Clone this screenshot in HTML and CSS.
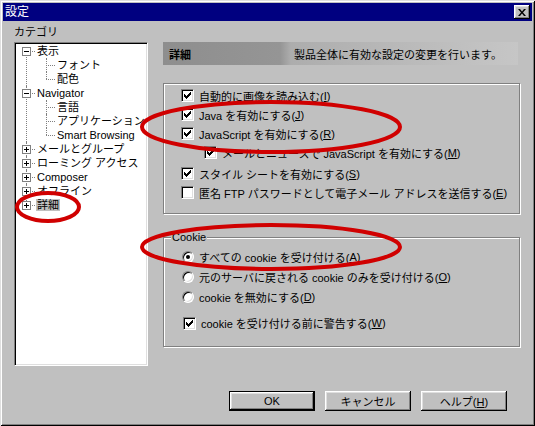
FILE: index.html
```html
<!DOCTYPE html>
<html lang="ja">
<head>
    <meta charset="UTF-8">
    <title>設定</title>
    <link rel="stylesheet" href="styles.css">
</head>
<body>

<div class="window">

    <div class="titlebar">
        <span class="title">設定</span>
        <span class="close">
            <svg width="8" height="7" viewBox="0 0 8 7"><path d="M0 0h2l2 2.4 2-2.4h2l-3 3.5 3 3.5h-2l-2-2.4-2 2.4h-2l3-3.5z"/></svg>
        </span>
    </div>

    <div class="content">

        <div class="left">
            <div class="cat-label">カテゴリ</div>
            <div class="tree">
                <ul class="tree-root">
                    <li>
                        <div class="row">
                            <svg class="exp" width="9" height="9" viewBox="0 0 9 9"><rect x=".5" y=".5" width="8" height="8" fill="#fff" stroke="#808080"/><path d="M2 4h5v1H2z"/></svg>
                            <span class="label">表示</span>
                        </div>
                        <ul>
                            <li><div class="row"><span class="label">フォント</span></div></li>
                            <li><div class="row"><span class="label">配色</span></div></li>
                        </ul>
                    </li>
                    <li>
                        <div class="row">
                            <svg class="exp" width="9" height="9" viewBox="0 0 9 9"><rect x=".5" y=".5" width="8" height="8" fill="#fff" stroke="#808080"/><path d="M2 4h5v1H2z"/></svg>
                            <span class="label">Navigator</span>
                        </div>
                        <ul>
                            <li><div class="row"><span class="label">言語</span></div></li>
                            <li><div class="row"><span class="label">アプリケーション</span></div></li>
                            <li><div class="row"><span class="label">Smart Browsing</span></div></li>
                        </ul>
                    </li>
                    <li>
                        <div class="row">
                            <svg class="exp" width="9" height="9" viewBox="0 0 9 9"><rect x=".5" y=".5" width="8" height="8" fill="#fff" stroke="#808080"/><path d="M2 4h5v1H2zM4 2h1v5H4z"/></svg>
                            <span class="label">メールとグループ</span>
                        </div>
                    </li>
                    <li>
                        <div class="row">
                            <svg class="exp" width="9" height="9" viewBox="0 0 9 9"><rect x=".5" y=".5" width="8" height="8" fill="#fff" stroke="#808080"/><path d="M2 4h5v1H2zM4 2h1v5H4z"/></svg>
                            <span class="label">ローミング アクセス</span>
                        </div>
                    </li>
                    <li>
                        <div class="row">
                            <svg class="exp" width="9" height="9" viewBox="0 0 9 9"><rect x=".5" y=".5" width="8" height="8" fill="#fff" stroke="#808080"/><path d="M2 4h5v1H2zM4 2h1v5H4z"/></svg>
                            <span class="label">Composer</span>
                        </div>
                    </li>
                    <li>
                        <div class="row">
                            <svg class="exp" width="9" height="9" viewBox="0 0 9 9"><rect x=".5" y=".5" width="8" height="8" fill="#fff" stroke="#808080"/><path d="M2 4h5v1H2zM4 2h1v5H4z"/></svg>
                            <span class="label">オフライン</span>
                        </div>
                    </li>
                    <li>
                        <div class="row">
                            <svg class="exp" width="9" height="9" viewBox="0 0 9 9"><rect x=".5" y=".5" width="8" height="8" fill="#fff" stroke="#808080"/><path d="M2 4h5v1H2zM4 2h1v5H4z"/></svg>
                            <span class="label sel">詳細</span>
                        </div>
                    </li>
                </ul>
            </div>
        </div>

        <div class="right">
            <div class="header">
                <b class="header-title">詳細</b>
                <span>製品全体に有効な設定の変更を行います。</span>
            </div>

            <div class="group group-general">
                <div class="opt"><span class="check"><svg width="7" height="7" viewBox="0 0 7 7"><path d="M0 2h1v1h1v1h1v-1h1v-1h1v-1h1v-1h1v3h-1v1h-1v1h-1v1h-1v1h-1v-1h-1v-1h-1z"/></svg></span>自動的に画像を読み込む(<u>I</u>)</div>
                <div class="opt"><span class="check"><svg width="7" height="7" viewBox="0 0 7 7"><path d="M0 2h1v1h1v1h1v-1h1v-1h1v-1h1v-1h1v3h-1v1h-1v1h-1v1h-1v1h-1v-1h-1v-1h-1z"/></svg></span>Java を有効にする(<u>J</u>)</div>
                <div class="opt"><span class="check"><svg width="7" height="7" viewBox="0 0 7 7"><path d="M0 2h1v1h1v1h1v-1h1v-1h1v-1h1v-1h1v3h-1v1h-1v1h-1v1h-1v1h-1v-1h-1v-1h-1z"/></svg></span>JavaScript を有効にする(<u>R</u>)</div>
                <div class="opt sub"><span class="check"><svg width="7" height="7" viewBox="0 0 7 7"><path d="M0 2h1v1h1v1h1v-1h1v-1h1v-1h1v-1h1v3h-1v1h-1v1h-1v1h-1v1h-1v-1h-1v-1h-1z"/></svg></span>メールとニュースで JavaScript を有効にする(<u>M</u>)</div>
                <div class="opt"><span class="check"><svg width="7" height="7" viewBox="0 0 7 7"><path d="M0 2h1v1h1v1h1v-1h1v-1h1v-1h1v-1h1v3h-1v1h-1v1h-1v1h-1v1h-1v-1h-1v-1h-1z"/></svg></span>スタイル シートを有効にする(<u>S</u>)</div>
                <div class="opt"><span class="check"></span>匿名 FTP パスワードとして電子メール アドレスを送信する(<u>E</u>)</div>
            </div>

            <div class="group group-cookie">
                <span class="group-title">Cookie</span>
                <div class="opt"><span class="radio on"></span>すべての cookie を受け付ける(<u>A</u>)</div>
                <div class="opt"><span class="radio"></span>元のサーバに戻される cookie のみを受け付ける(<u>O</u>)</div>
                <div class="opt"><span class="radio"></span>cookie を無効にする(<u>D</u>)</div>
                <div class="opt warn"><span class="check"><svg width="7" height="7" viewBox="0 0 7 7"><path d="M0 2h1v1h1v1h1v-1h1v-1h1v-1h1v-1h1v3h-1v1h-1v1h-1v1h-1v1h-1v-1h-1v-1h-1z"/></svg></span>cookie を受け付ける前に警告する(<u>W</u>)</div>
            </div>
        </div>

    </div>

    <div class="buttons">
        <button class="btn btn-default">OK</button>
        <button class="btn">キャンセル</button>
        <button class="btn">ヘルプ(<u>H</u>)</button>
    </div>

    <!-- 赤い丸印 -->
    <svg class="marks" width="535" height="426" viewBox="0 0 535 426">
        <ellipse cx="271" cy="127" rx="129" ry="25" fill="none" stroke="#d00000" stroke-width="4"/>
        <ellipse cx="271" cy="247" rx="129" ry="22" fill="none" stroke="#d00000" stroke-width="4"/>
        <ellipse cx="48" cy="207" rx="31" ry="14" fill="none" stroke="#d00000" stroke-width="4"/>
    </svg>

</div>

</body>
</html>
```

FILE: styles.css
```css
* {
    box-sizing: border-box;
}

body {
    margin: 0;
    background-color: #c0c0c0;
    font-family: "Liberation Sans", "Noto Sans CJK JP", sans-serif;
    font-size: 11px;
    color: #000;
}

u {
    text-decoration: underline;
}

.window {
    position: relative;
    width: 535px;
    height: 426px;
    padding: 3px;
    background-color: #c0c0c0;
    box-shadow: inset 1px 1px #dfdfdf, inset -1px -1px #000, inset 2px 2px #fff, inset -2px -2px #808080;
}

.titlebar {
    height: 18px;
    background-color: #000080;
    color: #fff;
    display: flex;
    align-items: center;
    justify-content: space-between;
    padding: 0 2px 0 2px;
}

.title {
    line-height: 18px;
    font-size: 12px;
}

.close {
    width: 16px;
    height: 14px;
    background-color: #c0c0c0;
    display: flex;
    align-items: center;
    justify-content: center;
    box-shadow: inset -1px -1px #000, inset 1px 1px #fff, inset -2px -2px #808080, inset 2px 2px #dfdfdf;
}

.content {
    display: flex;
    padding: 4px 0 0 11px;
}

.left {
    width: 134px;
    flex: none;
}

.cat-label {
    height: 15px;
    line-height: 15px;
    margin-bottom: 2px;
}

.tree {
    height: 324px;
    background-color: #fff;
    border: 1px solid;
    border-color: #808080 #fff #fff #808080;
    box-shadow: inset 1px 1px #000, inset -1px -1px #dfdfdf;
    padding: 1px 0 0 2px;
    overflow: hidden;
}

.tree ul {
    list-style: none;
    margin: 0;
    padding: 0;
}

.tree li {
    position: relative;
    padding-left: 20px;
}

.tree li::before {
    content: "";
    position: absolute;
    left: 9px;
    top: 0;
    bottom: 0;
    border-left: 1px dotted #808080;
}

.tree li:last-child::before {
    bottom: auto;
    height: 7px;
}

.tree-root > li:first-child::before {
    top: 7px;
}

.tree .row {
    position: relative;
    height: 14px;
    line-height: 14px;
    white-space: nowrap;
}

.tree .row::before {
    content: "";
    position: absolute;
    left: -11px;
    top: 7px;
    width: 9px;
    border-top: 1px dotted #808080;
}

.tree .exp {
    position: absolute;
    left: -15px;
    top: 3px;
}

.sel {
    background-color: #c0c0c0;
    padding: 0 1px;
    margin-left: -1px;
}

.right {
    width: 358px;
    margin-left: 15px;
    padding-top: 17px;
}

.header {
    width: 355px;
    height: 23px;
    display: flex;
    align-items: center;
    padding-left: 6px;
    background: linear-gradient(90deg, #8e8e8e 0, #959595 33%, #adadad 36%, #c6c6c6 100%);
}

.header-title {
    width: 125px;
    flex: none;
}

.group {
    position: relative;
    width: 357px;
    border: 1px solid #808080;
    box-shadow: inset 1px 1px #fff, 1px 1px #fff;
}

.group-general {
    margin-top: 18px;
    height: 131px;
    padding: 2px 0 0 17px;
}

.group-cookie {
    margin-top: 23px;
    height: 110px;
    padding: 9px 0 0 18px;
}

.group-title {
    position: absolute;
    top: -8px;
    left: 7px;
    padding: 0 1px;
    line-height: 14px;
    background-color: #c0c0c0;
}

.opt {
    display: flex;
    align-items: center;
    height: 19px;
    white-space: nowrap;
}

.group-cookie .opt {
    height: 20px;
}

.opt.sub {
    padding-left: 23px;
    margin-bottom: 2px;
}

.opt.warn {
    margin-top: 6px;
    padding-left: 1px;
}

.check {
    position: relative;
    flex: none;
    width: 13px;
    height: 13px;
    margin-right: 5px;
    background-color: #fff;
    border: 1px solid;
    border-color: #808080 #fff #fff #808080;
    box-shadow: inset 1px 1px #000, inset -1px -1px #dfdfdf;
}

.check svg {
    position: absolute;
    left: 2px;
    top: 2px;
}

.radio {
    position: relative;
    flex: none;
    width: 12px;
    height: 12px;
    margin-right: 5px;
    border-radius: 50%;
    background-color: #fff;
    border: 1px solid;
    border-color: #808080 #fff #fff #808080;
    box-shadow: inset 1px 1px #000, inset -1px -1px #dfdfdf;
}

.radio.on::after {
    content: "";
    position: absolute;
    left: 3px;
    top: 3px;
    width: 4px;
    height: 4px;
    border-radius: 50%;
    background-color: #000;
}

.buttons {
    display: flex;
    gap: 10px;
    margin-top: 25px;
    padding-left: 226px;
}

.btn {
    width: 86px;
    height: 20px;
    padding: 0;
    border: none;
    background-color: #c0c0c0;
    font-family: inherit;
    font-size: 11px;
    color: #000;
    box-shadow: inset -1px -1px #000, inset 1px 1px #fff, inset -2px -2px #808080, inset 2px 2px #dfdfdf;
}

.btn-default {
    box-shadow: inset 0 0 0 1px #000, inset -2px -2px #000, inset 2px 2px #fff, inset -3px -3px #808080, inset 3px 3px #dfdfdf;
}

.marks {
    position: absolute;
    left: 0;
    top: 0;
    pointer-events: none;
}
```
